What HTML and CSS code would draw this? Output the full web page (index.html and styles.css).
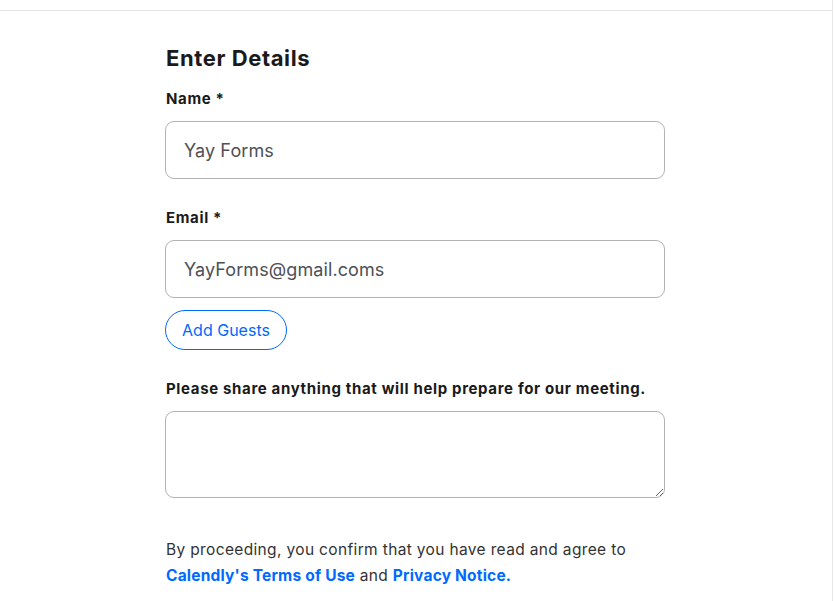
FILE: index.html
```html
<!DOCTYPE html>
<html lang="en">
<head>
<meta charset="utf-8">
<title>Enter Details</title>
<link rel="stylesheet" href="styles.css">
</head>
<body>
<div class="panel">
  <div class="topbar"></div>
  <form class="form">
    <h1 class="title">Enter Details</h1>
    <div class="field">
      <label class="label" for="name">Name *</label>
      <input class="input" id="name" type="text" value="Yay Forms">
    </div>
    <div class="field field-email">
      <label class="label" for="email">Email *</label>
      <input class="input" id="email" type="text" value="YayForms@gmail.coms">
    </div>
    <button type="button" class="guests">Add Guests</button>
    <div class="field field-notes">
      <label class="label" for="notes">Please share anything that will help prepare for our meeting.</label>
      <textarea class="textarea" id="notes"></textarea>
    </div>
    <p class="legal">By proceeding, you confirm that you have read and agree to<br><a class="link" href="#">Calendly's Terms of Use</a> and <a class="link" href="#">Privacy Notice.</a></p>
  </form>
</div>
</body>
</html>
```

FILE: styles.css
```css
html, body {
  margin: 0;
  padding: 0;
  background: #ffffff;
}
body {
  font-family: "Inter", "Liberation Sans", sans-serif;
  color: #1a1a1a;
}
.panel {
  width: 832px;
  min-height: 601px;
  border-right: 1px solid #e6e6e6;
  box-sizing: content-box;
}
.topbar {
  height: 10px;
  border-bottom: 1px solid #e6e6e6;
}
.form {
  display: flex;
  flex-direction: column;
  width: 500px;
  padding-left: 165px;
  padding-top: 32px;
}
.title {
  margin: 0 0 14px 1px;
  font-size: 22px;
  line-height: 30px;
  font-weight: 700;
  letter-spacing: 0.6px;
  color: #1a1a1a;
}
.field {
  display: flex;
  flex-direction: column;
}
.label {
  margin-left: 1px;
  padding-top: 1px;
  font-size: 15px;
  line-height: 22px;
  font-weight: 700;
  letter-spacing: 0.65px;
  color: #1a1a1a;
  margin-bottom: 11px;
}
.input {
  box-sizing: border-box;
  width: 500px;
  height: 58px;
  border: 1px solid #b2b2b2;
  border-radius: 9px;
  padding: 0 18px;
  font-family: inherit;
  font-size: 18px;
  letter-spacing: 0.1px;
  color: #4d5055;
  background: #ffffff;
  outline: none;
}
.field-email {
  margin-top: 27px;
}
.guests {
  align-self: flex-start;
  margin-top: 12px;
  height: 40px;
  width: 122px;
  border: 1px solid #0069ff;
  border-radius: 20px;
  background: #ffffff;
  color: #0069ff;
  font-family: inherit;
  font-size: 16px;
  padding: 0;
}
.field-notes {
  margin-top: 27px;
}
.textarea {
  box-sizing: border-box;
  width: 500px;
  height: 87px;
  border: 1px solid #b2b2b2;
  border-radius: 9px;
  padding: 12px 18px;
  font-family: inherit;
  font-size: 16px;
  outline: none;
  resize: vertical;
}
.legal {
  margin: 39px 0 0 1px;
  font-size: 15.5px;
  line-height: 26px;
  letter-spacing: 0.35px;
  color: #333333;
}
.link {
  color: #0069ff;
  font-weight: 700;
  letter-spacing: 0.2px;
  text-decoration: none;
}
```
